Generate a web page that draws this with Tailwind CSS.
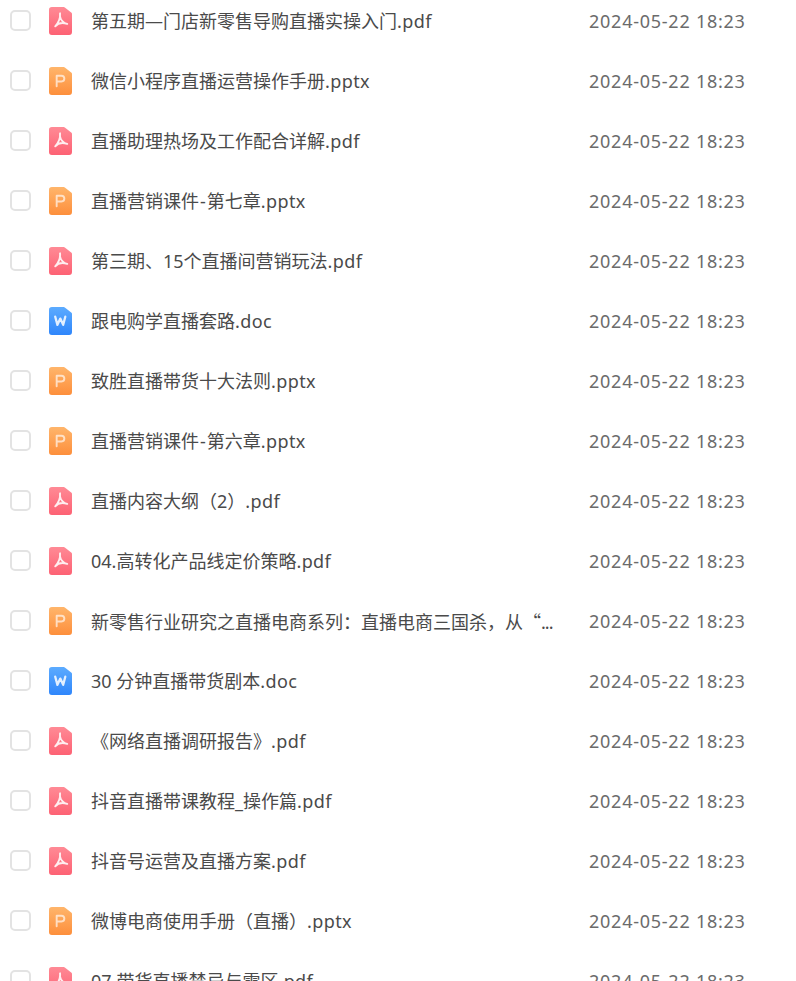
<!DOCTYPE html>
<html lang="zh-CN">
  <head>
    <meta charset="UTF-8" />
    <meta name="viewport" content="width=device-width, initial-scale=1.0" />
    <title>文件列表</title>
    <script src="https://cdn.jsdelivr.net/npm/@tailwindcss/browser@4"></script>
  </head>
  <body class="bg-white h-[981px] overflow-hidden font-['Noto_Sans','Noto_Sans_CJK_SC',sans-serif]">
    <svg class="absolute w-0 h-0">
      <defs>
        <linearGradient id="g-pdf" x1="0" y1="0" x2="0" y2="1">
          <stop offset="0" stop-color="#ff8a95" />
          <stop offset="1" stop-color="#fd6274" />
        </linearGradient>
        <linearGradient id="g-ppt" x1="0" y1="0" x2="0" y2="1">
          <stop offset="0" stop-color="#ffb56b" />
          <stop offset="1" stop-color="#fd8f3c" />
        </linearGradient>
        <linearGradient id="g-doc" x1="0" y1="0" x2="0" y2="1">
          <stop offset="0" stop-color="#5cabff" />
          <stop offset="1" stop-color="#2f86fb" />
        </linearGradient>
      </defs>
      <symbol id="i-pdf" viewBox="0 0 24 29">
        <path d="M3 0H15.500a1.500 1.500 0 0 1 1 .4L23.500 6a1.500 1.500 0 0 1 .5 1.100V26a3 3 0 0 1-3 3H3a3 3 0 0 1-3-3V3a3 3 0 0 1 3-3Z" fill="url(#g-pdf)" />
        <path d="M11.500 6.500C12 11 10 16 6.500 20M11.500 10C12 13 15 17 19 17.500M6.500 20C9 17 14 16 19 17.500" fill="none" stroke="#fff" stroke-opacity="0.88" stroke-width="2" stroke-linecap="round" stroke-linejoin="round" />
      </symbol>
      <symbol id="i-ppt" viewBox="0 0 24 29">
        <path d="M3 0H15.500a1.500 1.500 0 0 1 1 .4L23.500 6a1.500 1.500 0 0 1 .5 1.100V26a3 3 0 0 1-3 3H3a3 3 0 0 1-3-3V3a3 3 0 0 1 3-3Z" fill="url(#g-ppt)" />
        <path d="M8 20V9H13a3 3 0 0 1 0 6H8" fill="none" stroke="#fff" stroke-opacity="0.65" stroke-width="2" stroke-linecap="round" stroke-linejoin="round" />
      </symbol>
      <symbol id="i-doc" viewBox="0 0 24 29">
        <path d="M3 0H15.500a1.500 1.500 0 0 1 1 .4L23.500 6a1.500 1.500 0 0 1 .5 1.100V26a3 3 0 0 1-3 3H3a3 3 0 0 1-3-3V3a3 3 0 0 1 3-3Z" fill="url(#g-doc)" />
        <path d="M6.500 10L8.800 18.500L11.800 12L14.800 18.500L17 10" fill="none" stroke="#fff" stroke-opacity="0.85" stroke-width="2.400" stroke-linecap="round" stroke-linejoin="round" />
      </symbol>
    </svg>

    <ul id="file-list" class="-mt-[9px]"></ul>

    <script>
      const hyphen = `<span class="mx-px">-</span>`;
      const quote = `<span class="font-['Noto_Sans_CJK_SC']">“</span>`;
      const dots = `<span class="tracking-[-1px]">...</span>`;
      const files = [
        ["pdf", "第五期—门店新零售导购直播实操入门", ".pdf"],
        ["ppt", "微信小程序直播运营操作手册", ".pptx"],
        ["pdf", "直播助理热场及工作配合详解", ".pdf"],
        ["ppt", `直播营销课件${hyphen}第七章`, ".pptx"],
        ["pdf", "第三期、15个直播间营销玩法", ".pdf"],
        ["doc", "跟电购学直播套路", ".doc"],
        ["ppt", "致胜直播带货十大法则", ".pptx"],
        ["ppt", `直播营销课件${hyphen}第六章`, ".pptx"],
        ["pdf", "直播内容大纲（2）", ".pdf"],
        ["pdf", "04.高转化产品线定价策略", ".pdf"],
        ["ppt", `新零售行业研究之直播电商系列：直播电商三国杀，从${quote}${dots}`, ""],
        ["doc", "30 分钟直播带货剧本", ".doc"],
        ["pdf", "《网络直播调研报告》", ".pdf"],
        ["pdf", "抖音直播带课教程_操作篇", ".pdf"],
        ["pdf", "抖音号运营及直播方案", ".pdf"],
        ["ppt", "微博电商使用手册（直播）", ".pptx"],
        ["pdf", "07.带货直播禁忌与雷区", ".pdf"],
      ];

      document.getElementById("file-list").innerHTML = files
        .map(
          ([type, name, ext]) => `
        <li class="flex items-center h-[60px]">
          <span class="ml-[10px] mb-px w-[21px] h-[21px] shrink-0 rounded-[5px] border-2 border-[#e3e3e3] bg-white"></span>
          <svg class="ml-[18px] w-[23px] h-[28px] shrink-0"><use href="#i-${type}"></use></svg>
          <span class="ml-[19px] w-[464px] shrink-0 whitespace-nowrap text-[18px] leading-[28px] text-[#4a4a4a]">${name}<span class="tracking-[0.4px]">${ext}</span></span>
          <span class="ml-[34px] text-[18px] leading-[28px] tracking-[0.75px] whitespace-nowrap text-[#6b6b6b]">2024-05-22 18:23</span>
        </li>`
        )
        .join("");
    </script>
  </body>
</html>
